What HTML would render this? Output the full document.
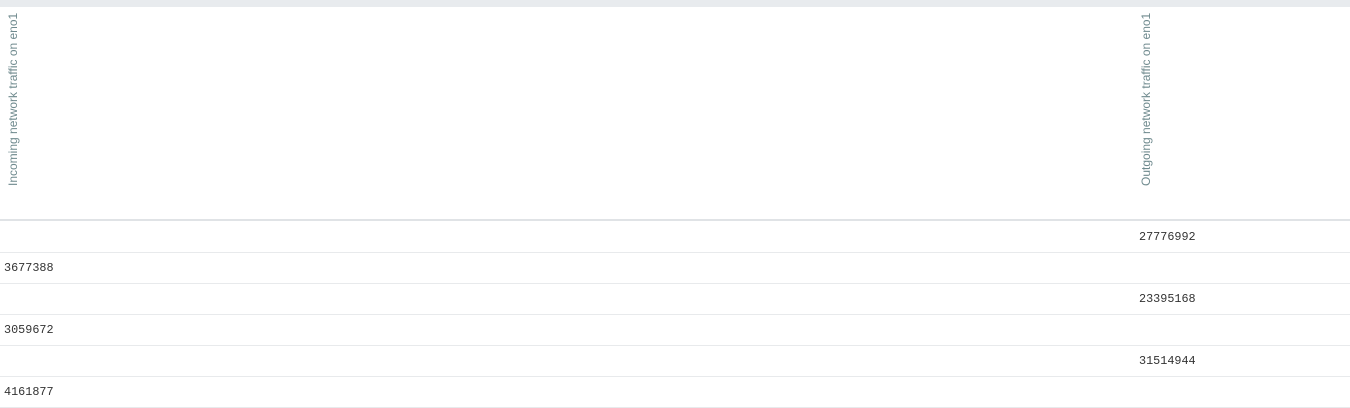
<!DOCTYPE html>
<html><head><style>
html,body{margin:0;padding:0;width:1350px;height:408px;background:#fff;overflow:hidden;position:relative;font-family:"Liberation Sans",Arial,sans-serif}
.top{position:absolute;left:0;top:0;width:1350px;height:7px;background:#e8ebee}
.hb{position:absolute;left:0;top:219px;width:1350px;height:2px;background:#e0e3e6}
.rl{position:absolute;left:0;width:1350px;height:1px;background:#e8eaec}
.v{position:absolute;writing-mode:vertical-rl;transform:rotate(180deg);font-size:12px;line-height:14px;color:#6f8a8e;white-space:nowrap;top:14px;height:172px;text-align:left}
.n{position:absolute;font-family:"Liberation Mono",monospace;font-size:11.8px;color:#333;line-height:12px}
</style></head><body>
<div class="top"></div>
<div class="v" style="left:6px">Incoming network traffic on eno1</div>
<div class="v" style="left:1139px">Outgoing network traffic on eno1</div>
<div class="hb"></div>
<div class="rl" style="top:252px"></div>
<div class="rl" style="top:283px"></div>
<div class="rl" style="top:314px"></div>
<div class="rl" style="top:345px"></div>
<div class="rl" style="top:376px"></div>
<div class="rl" style="top:407px"></div>
<div class="n" style="left:1139px;top:231px">27776992</div>
<div class="n" style="left:4px;top:262px">3677388</div>
<div class="n" style="left:1139px;top:293px">23395168</div>
<div class="n" style="left:4px;top:324px">3059672</div>
<div class="n" style="left:1139px;top:355px">31514944</div>
<div class="n" style="left:4px;top:386px">4161877</div>
</body></html>
